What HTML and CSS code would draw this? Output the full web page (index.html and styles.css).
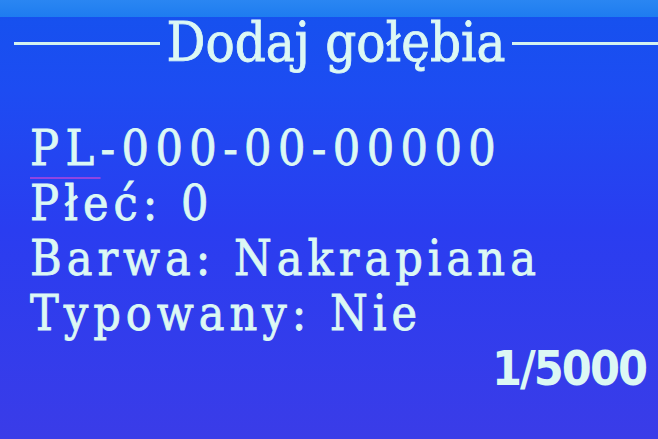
FILE: index.html
```html
<!DOCTYPE html>
<html lang="pl">
<head>
<meta charset="utf-8">
<title>Dodaj gołębia</title>
<link rel="stylesheet" href="styles.css">
</head>
<body>
<div class="screen">
  <div class="topstrip"></div>
  <div class="titlerow">
    <div class="rule"></div>
    <div class="title">Dodaj gołębia</div>
    <div class="rule"></div>
  </div>
  <div class="fields">
    <div class="line ring"><span class="cursor">PL</span>-000-00-00000</div>
    <div class="line">Płeć: 0</div>
    <div class="line">Barwa: Nakrapiana</div>
    <div class="line">Typowany: Nie</div>
  </div>
  <div class="counter">1/5000</div>
</div>
</body>
</html>
```

FILE: styles.css
```css
html, body {
  margin: 0;
  padding: 0;
  background: #2a3be6;
}
.screen {
  width: 658px;
  height: 439px;
  overflow: hidden;
  display: flex;
  flex-direction: column;
  color: #dcf8f4;
  font-family: "DejaVu Serif", "Liberation Serif", serif;
  font-stretch: condensed;
  background: linear-gradient(180deg, #1552ee 0px, #1d4cf2 90px, #2a3df0 230px, #3a3ce8 439px);
}
.topstrip {
  height: 17px;
  background: linear-gradient(180deg, #2a86f2, #1e7cf0);
}
.titlerow {
  height: 52px;
  display: flex;
  align-items: center;
  gap: 6px;
  padding-left: 14px;
}
.rule {
  flex: 1;
  height: 3px;
  background: #d4f2f0;
}
.title {
  font-size: 54px;
  line-height: 52px;
  white-space: pre;
  -webkit-text-stroke: 0.8px currentColor;
}
.fields {
  padding: 52px 0 0 30px;
  display: flex;
  flex-direction: column;
}
.line {
  font-size: 48px;
  line-height: 55px;
  white-space: pre;
  letter-spacing: 5px;
  -webkit-text-stroke: 0.8px currentColor;
}
.ring {
  letter-spacing: 6.4px;
}
.cursor {
  text-decoration: underline;
  text-decoration-color: rgba(190, 70, 220, 0.7);
  text-decoration-thickness: 2px;
  text-underline-offset: 12px;
}
.counter {
  align-self: flex-end;
  margin-right: 12px;
  font-family: "DejaVu Sans", "Liberation Sans", sans-serif;
  font-stretch: condensed;
  font-weight: bold;
  font-size: 48px;
  line-height: 55px;
  letter-spacing: -2px;
}
```
